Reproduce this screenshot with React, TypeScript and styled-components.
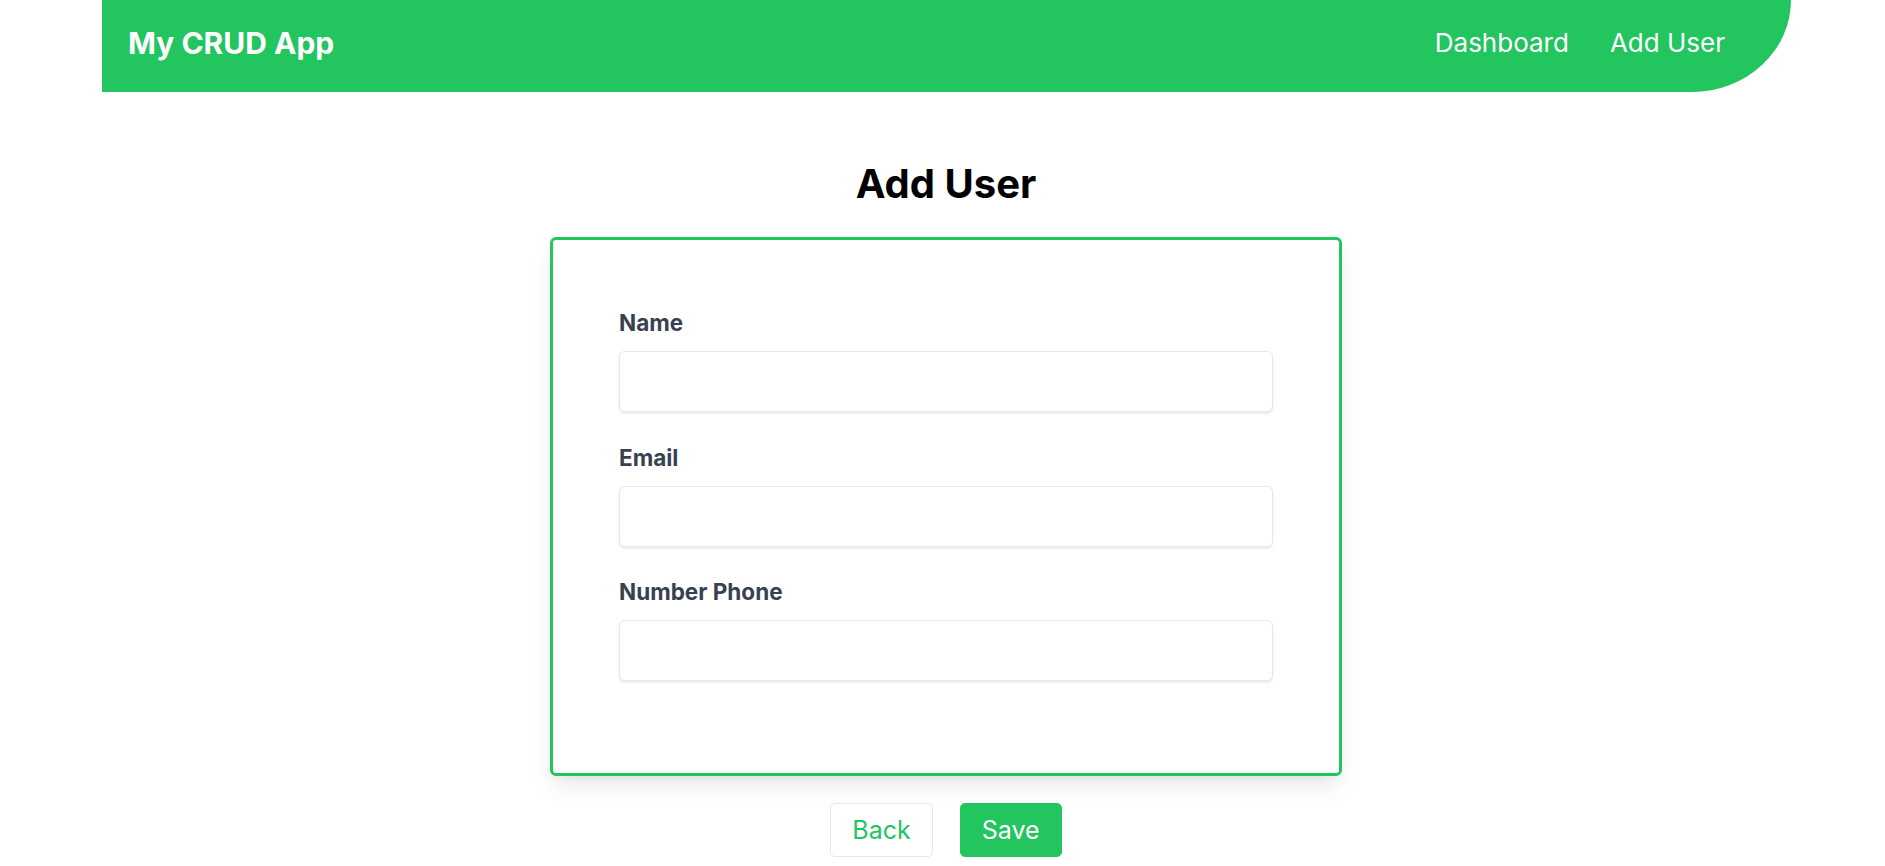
import React, { useState } from 'react';
import styled, { createGlobalStyle } from 'styled-components';

const GlobalStyle = createGlobalStyle`
  * {
    box-sizing: border-box;
  }

  body {
    margin: 0;
    background: #ffffff;
    font-family: Inter, "Noto Sans", "Liberation Sans", sans-serif;
    color: #000000;
  }
`;

const green = '#22c55e';

const PageLayout = styled.div`
  display: flex;
  flex-direction: column;
  min-height: 866px;
`;

const HeaderBar = styled.header`
  display: flex;
  justify-content: space-between;
  align-items: center;
  height: 92px;
  margin: 0 94px 0 102px;
  padding: 0 66px 7px 26px;
  background: ${green};
  border-bottom-right-radius: 99px 92px;
`;

const LogoText = styled.div`
  font-size: 30px;
  font-weight: 700;
  color: #ffffff;
`;

const NavList = styled.nav`
  display: flex;
  align-items: center;
  gap: 41px;
`;

const NavLink = styled.a`
  font-size: 26px;
  color: #ffffff;
  text-decoration: none;
  cursor: pointer;
`;

const MainSection = styled.main`
  display: flex;
  flex-direction: column;
  align-items: center;
  padding-left: 7px;
`;

const PageTitle = styled.h1`
  margin: 66px 0 27px;
  font-size: 40px;
  line-height: 52px;
  font-weight: 700;
`;

const FormCard = styled.form`
  display: flex;
  flex-direction: column;
  gap: 28.5px;
  width: 792px;
  padding: 66px 66px 92px;
  border: 3px solid ${green};
  border-radius: 6px;
  background: #ffffff;
  box-shadow: 0 12px 24px -4px rgba(0, 0, 0, 0.1), 0 5px 10px -5px rgba(0, 0, 0, 0.06);
`;

const FieldGroup = styled.div`
  display: flex;
  flex-direction: column;
  gap: 11px;
`;

const FieldLabel = styled.label`
  font-size: 22.5px;
  line-height: 34px;
  font-weight: 650;
  color: #374151;
`;

const TextInput = styled.input`
  width: 100%;
  height: 61px;
  padding: 0 18px;
  border: 1.2px solid #e5e7eb;
  border-radius: 6px;
  font-family: inherit;
  font-size: 21px;
  color: #111827;
  box-shadow: 0 1.2px 2.4px rgba(0, 0, 0, 0.08);
  outline: none;
`;

const ButtonRow = styled.div`
  display: flex;
  justify-content: center;
  gap: 27px;
  margin-top: 27px;
`;

const ActionButton = styled.button<{ $primary?: boolean }>`
  height: 54px;
  padding: 0 21px;
  border: 1.2px solid ${(props) => (props.$primary ? green : '#e5e7eb')};
  border-radius: 5px;
  background: ${(props) => (props.$primary ? green : '#ffffff')};
  color: ${(props) => (props.$primary ? '#ffffff' : green)};
  font-family: inherit;
  font-size: 25px;
  font-weight: 400;
  cursor: pointer;
`;

const fields = [
  { id: 'name', label: 'Name', type: 'text' },
  { id: 'email', label: 'Email', type: 'email' },
  { id: 'phone', label: 'Number Phone', type: 'tel' },
];

function App() {
  const [values, setValues] = useState<Record<string, string>>({ name: '', email: '', phone: '' });

  return (
    <PageLayout>
      <GlobalStyle />
      <HeaderBar>
        <LogoText>My CRUD App</LogoText>
        <NavList>
          <NavLink>Dashboard</NavLink>
          <NavLink>Add User</NavLink>
        </NavList>
      </HeaderBar>
      <MainSection>
        <PageTitle>Add User</PageTitle>
        <FormCard onSubmit={(e) => e.preventDefault()}>
          {fields.map((field) => (
            <FieldGroup key={field.id}>
              <FieldLabel htmlFor={field.id}>{field.label}</FieldLabel>
              <TextInput
                id={field.id}
                type={field.type}
                value={values[field.id]}
                onChange={(e) => setValues({ ...values, [field.id]: e.target.value })}
              />
            </FieldGroup>
          ))}
        </FormCard>
        <ButtonRow>
          <ActionButton type="button">Back</ActionButton>
          <ActionButton type="button" $primary>Save</ActionButton>
        </ButtonRow>
      </MainSection>
    </PageLayout>
  );
}

export default App;
